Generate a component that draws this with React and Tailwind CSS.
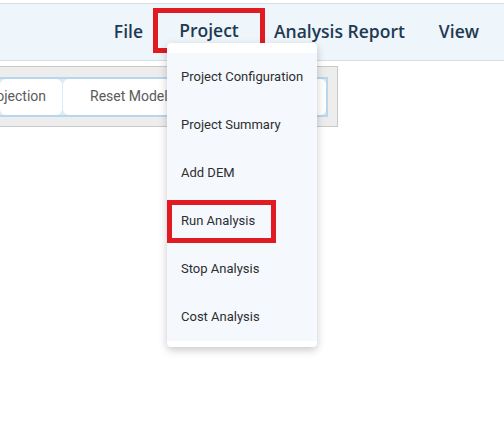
import React from "react";

const menuFont = { fontFamily: '"Open Sans", "Noto Sans", sans-serif' };
const itemFont = { fontFamily: 'Roboto, "Noto Sans", sans-serif' };

const projectItems = [
  "Project Configuration",
  "Project Summary",
  "Add DEM",
  "Run Analysis",
  "Stop Analysis",
  "Cost Analysis",
];

function ToolButton({ label, className }) {
  return (
    <div
      className={`h-[36px] shrink-0 flex items-center justify-center rounded-[6px] bg-white text-[14px] text-[#5a5a5a] ${className}`}
      style={itemFont}
    >
      {label}
    </div>
  );
}

export default function App() {
  return (
    <div className="relative w-[504px] h-[439px] overflow-hidden bg-white">
      {/* top menu bar */}
      <header className="mt-[3px] h-[58px] border-t border-b border-[#d6dde4] bg-[#eef5fb] flex items-center justify-end pr-[25px] pb-[2px]">
        <nav className="flex items-center text-[17.5px] font-semibold text-[#1f3a52]" style={menuFont}>
          <span>File</span>
          <span className="ml-[10px] mb-[2px] w-[112px] h-[45px] border-[5px] border-[#e01b22] flex items-center justify-center">
            Project
          </span>
          <span className="ml-[9px]">Analysis Report</span>
          <span className="ml-[34px]">View</span>
        </nav>
      </header>

      {/* model toolbar */}
      <div className="mt-[5px] w-[338px] h-[61px] border border-l-0 border-[#c9c9c9] bg-[#ededed] flex items-center">
        <div className="w-[328px] h-[40px] border-2 border-l-0 border-[#b8d7ec] bg-[#dcecf7] flex items-center gap-[1px] overflow-hidden">
          <ToolButton label="Set Projection" className="w-[62px] justify-end pr-[16px] overflow-hidden whitespace-nowrap" />
          <ToolButton label="Reset Model" className="w-[130px] justify-start pl-[27px]" />
          <ToolButton label="Zoom" className="w-[132px]" />
        </div>
      </div>

      {/* open "Project" dropdown */}
      <div className="absolute left-[167px] top-[43px] w-[150px] rounded-[4px] bg-white pt-[10px] pb-[6px] shadow-[0_3px_8px_rgba(0,0,0,0.22)]">
        <ul className="bg-[#f5f9fe]" style={itemFont}>
          {projectItems.map((item) => (
            <li key={item} className="relative h-[48px] flex items-center pl-[14px] text-[13px] text-[#2e2e2e]">
              {item}
              {item === "Run Analysis" && (
                <span className="absolute left-[0px] top-[3px] w-[109px] h-[43px] border-[5px] border-[#e01b22]" />
              )}
            </li>
          ))}
        </ul>
      </div>
    </div>
  );
}
